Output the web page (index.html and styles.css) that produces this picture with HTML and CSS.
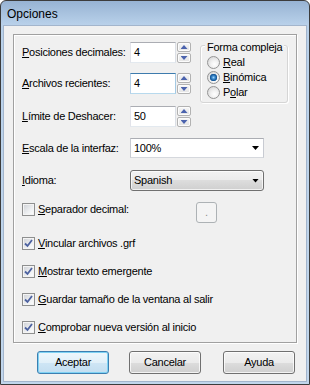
FILE: index.html
```html
<!DOCTYPE html>
<html>
<head>
<meta charset="utf-8">
<link rel="stylesheet" href="styles.css">
</head>
<body>
<div class="window">
  <div class="titlebar">Opciones</div>
  <div class="client">
    <div class="group">
      <div class="top">
        <div class="fields">
          <div class="row r1">
            <span class="lbl"><u>P</u>osiciones decimales:</span>
            <span class="edit">4</span>
            <span class="spin"><span class="sb up"></span><span class="sb down"></span></span>
          </div>
          <div class="row r2">
            <span class="lbl"><u>A</u>rchivos recientes:</span>
            <span class="edit focus">4</span>
            <span class="spin"><span class="sb up"></span><span class="sb down"></span></span>
          </div>
          <div class="row r3">
            <span class="lbl"><u>L</u>ímite de Deshacer:</span>
            <span class="edit">50</span>
            <span class="spin"><span class="sb up"></span><span class="sb down"></span></span>
          </div>
        </div>
        <div class="frame">
          <span class="legend">Forma compleja</span>
          <div class="radio first"><span class="rb"></span><span><u>R</u>eal</span></div>
          <div class="radio"><span class="rb on"></span><span><u>B</u>inómica</span></div>
          <div class="radio"><span class="rb"></span><span>P<u>o</u>lar</span></div>
        </div>
      </div>
      <div class="row r4">
        <span class="lbl"><u>E</u>scala de la interfaz:</span>
        <span class="combo"><span>100%</span><span class="arrow"></span></span>
      </div>
      <div class="row r5">
        <span class="lbl"><u>I</u>dioma:</span>
        <span class="combo btnlike"><span>Spanish</span><span class="arrow"></span></span>
      </div>
      <div class="row r6">
        <span class="cklabel"><span class="cb"></span><span><u>S</u>eparador decimal:</span></span>
        <span class="dotbtn">.</span>
      </div>
      <div class="chk c1"><span class="cb on"><svg width="11" height="11" viewBox="0 0 11 11"><polyline points="2,5.5 4.5,8 9,2" fill="none" stroke="#4d62a0" stroke-width="1.8"/></svg></span><span><u>V</u>incular archivos .grf</span></div>
      <div class="chk"><span class="cb on"><svg width="11" height="11" viewBox="0 0 11 11"><polyline points="2,5.5 4.5,8 9,2" fill="none" stroke="#4d62a0" stroke-width="1.8"/></svg></span><span><u>M</u>ostrar texto emergente</span></div>
      <div class="chk"><span class="cb on"><svg width="11" height="11" viewBox="0 0 11 11"><polyline points="2,5.5 4.5,8 9,2" fill="none" stroke="#4d62a0" stroke-width="1.8"/></svg></span><span><u>G</u>uardar tamaño de la ventana al salir</span></div>
      <div class="chk"><span class="cb on"><svg width="11" height="11" viewBox="0 0 11 11"><polyline points="2,5.5 4.5,8 9,2" fill="none" stroke="#4d62a0" stroke-width="1.8"/></svg></span><span><u>C</u>omprobar nueva versión al inicio</span></div>
    </div>
    <div class="btns">
      <span class="btn default">Aceptar</span>
      <span class="btn b2">Cancelar</span>
      <span class="btn b3">Ayuda</span>
    </div>
  </div>
</div>
</body>
</html>
```
FILE: styles.css
```css
body {
  margin: 0;
  font-family: "Liberation Sans", Arial, sans-serif;
  font-size: 11px;
  color: #000;
}
.window {
  width: 310px;
  height: 385px;
  box-sizing: border-box;
  border: 1px solid #3c3c3c;
  border-radius: 6px 6px 0 0;
  background: linear-gradient(#97b3d3 0, #b9d1ea 24px, #c1d6ec 100%);
  display: flex;
  flex-direction: column;
}
.titlebar {
  height: 24px;
  line-height: 26px;
  padding-left: 6px;
  font-size: 12px;
}
.client {
  flex: 1;
  margin: 0 2px 2px;
  border: 1px solid #a3b5cc;
  background: #f0f0f0;
}
.group {
  box-sizing: border-box;
  height: 309px;
  margin: 8px 9px 0;
  padding: 7px 0 0 8px;
  border: 1px solid #a0a0a0;
  box-shadow: inset 1px 1px 0 #fff, 1px 1px 0 #fff;
  letter-spacing: -0.25px;
  line-height: 13px;
}
.top {
  display: flex;
  align-items: flex-start;
}
.fields {
  width: 169px;
  flex: none;
}
.row {
  display: flex;
  align-items: center;
}
.r2 { margin-top: 10px; }
.r3 { margin-top: 12px; }
.r4 { margin-top: 11px; }
.r5 { margin-top: 12px; }
.r6 { margin-top: 11px; height: 21px; align-items: flex-start; }
.lbl {
  width: 108px;
  flex: none;
  white-space: nowrap;
}
.edit {
  box-sizing: border-box;
  width: 46px;
  height: 21px;
  border: 1px solid;
  border-color: #abadb3 #dbdfe6 #e3e9ef #e2e3ea;
  background: #fff;
  padding-left: 3px;
  line-height: 19px;
}
.edit.focus {
  border-color: #3d7bad #a4c9e3 #b7d9ed #b5cfe7;
}
.spin {
  display: flex;
  flex-direction: column;
  gap: 1px;
  margin-left: 1px;
}
.sb {
  box-sizing: border-box;
  width: 14px;
  height: 10px;
  border: 1px solid #b2b2b2;
  border-radius: 2px;
  background: linear-gradient(#f7f7f7, #e3e3e3);
  box-shadow: inset 0 0 0 1px #fcfcfc;
  display: flex;
  align-items: center;
  justify-content: center;
}
.sb::after {
  content: "";
  width: 7px;
  height: 4px;
  background: #4b63ad;
}
.sb.up::after { clip-path: polygon(50% 0, 100% 100%, 0 100%); }
.sb.down::after { clip-path: polygon(0 0, 100% 0, 50% 100%); }

.frame {
  box-sizing: border-box;
  width: 88px;
  height: 58px;
  margin: 3px 0 0 9px;
  padding-left: 6px;
  border: 1px solid #d5d5d5;
  border-radius: 3px;
  box-shadow: inset 1px 1px 0 #fff, 1px 1px 0 #fff;
}
.legend {
  display: block;
  width: fit-content;
  margin: -5px 0 0 -2px;
  padding: 0 2px;
  background: #f0f0f0;
  line-height: 13px;
  white-space: nowrap;
}
.radio {
  height: 15px;
  display: flex;
  align-items: center;
  gap: 3px;
}
.radio.first { margin-top: 1px; }
.rb {
  box-sizing: border-box;
  width: 13px;
  height: 13px;
  border-radius: 50%;
  border: 1px solid #949494;
  background: radial-gradient(circle at 60% 65%, #ffffff 0, #f2f2f2 35%, #d4d4d4 90%);
}
.rb.on {
  background:
    radial-gradient(circle at 50% 50%, #9fd3f7 0, #3b8bd0 1.6px, #1a5b9a 3px, #2a6aa8 3.5px, transparent 4px),
    radial-gradient(circle at 60% 65%, #ffffff 0, #f2f2f2 35%, #d4d4d4 90%);
}
.combo {
  box-sizing: border-box;
  width: 134px;
  height: 20px;
  border: 1px solid;
  border-color: #abadb3 #c8cbd2 #d5d8dd #c8cbd2;
  background: #fff;
  padding-left: 3px;
  display: flex;
  align-items: center;
  justify-content: space-between;
}
.combo.btnlike {
  height: 21px;
  border: 1px solid #707070;
  border-radius: 3px;
  background: linear-gradient(#f2f2f2 0, #ebebeb 50%, #dddddd 50%, #cfcfcf 100%);
  box-shadow: inset 0 0 0 1px rgba(255,255,255,0.7);
}
.arrow {
  width: 7px;
  height: 4px;
  margin-right: 4px;
  background: #000;
  clip-path: polygon(0 0, 100% 0, 50% 100%);
}
.cklabel {
  width: 174px;
  flex: none;
  display: flex;
  align-items: center;
  gap: 3px;
  margin-top: 1px;
  white-space: nowrap;
}
.cb {
  box-sizing: border-box;
  width: 13px;
  height: 13px;
  flex: none;
  border: 1px solid #8e8f8f;
  background: linear-gradient(135deg, #cdd0d5 0, #eef0f2 60%, #ffffff 100%);
  box-shadow: inset 0 0 0 1px #f4f4f4;
  display: flex;
  align-items: center;
  justify-content: center;
}
.cb svg { display: block; }
.dotbtn {
  box-sizing: border-box;
  width: 21px;
  height: 21px;
  border: 1px solid #adb2b5;
  border-radius: 3px;
  background: #f4f4f4;
  color: #8d8d8d;
  text-align: center;
  line-height: 19px;
}
.chk {
  height: 13px;
  margin-top: 15px;
  display: flex;
  align-items: center;
  gap: 3px;
  white-space: nowrap;
}
.chk.c1 { margin-top: 14px; }
.btns {
  display: flex;
  margin-top: 8px;
  padding-left: 33px;
}
.btn {
  box-sizing: border-box;
  width: 72px;
  height: 23px;
  border: 1px solid #707070;
  border-radius: 3px;
  background: linear-gradient(#f2f2f2 0, #ebebeb 50%, #dddddd 50%, #cfcfcf 100%);
  box-shadow: inset 0 0 0 1px rgba(255,255,255,0.75);
  text-align: center;
  line-height: 21px;
  letter-spacing: -0.25px;
}
.btn.default {
  border-color: #3c7fb1;
  background: linear-gradient(#eef7fc 0, #e1f0f9 50%, #cfe6f5 50%, #c3def0 100%);
  box-shadow: inset 0 0 0 1px #7fd2f3;
}
.b2 { margin-left: 20px; }
.b3 { margin-left: 22px; }
```
